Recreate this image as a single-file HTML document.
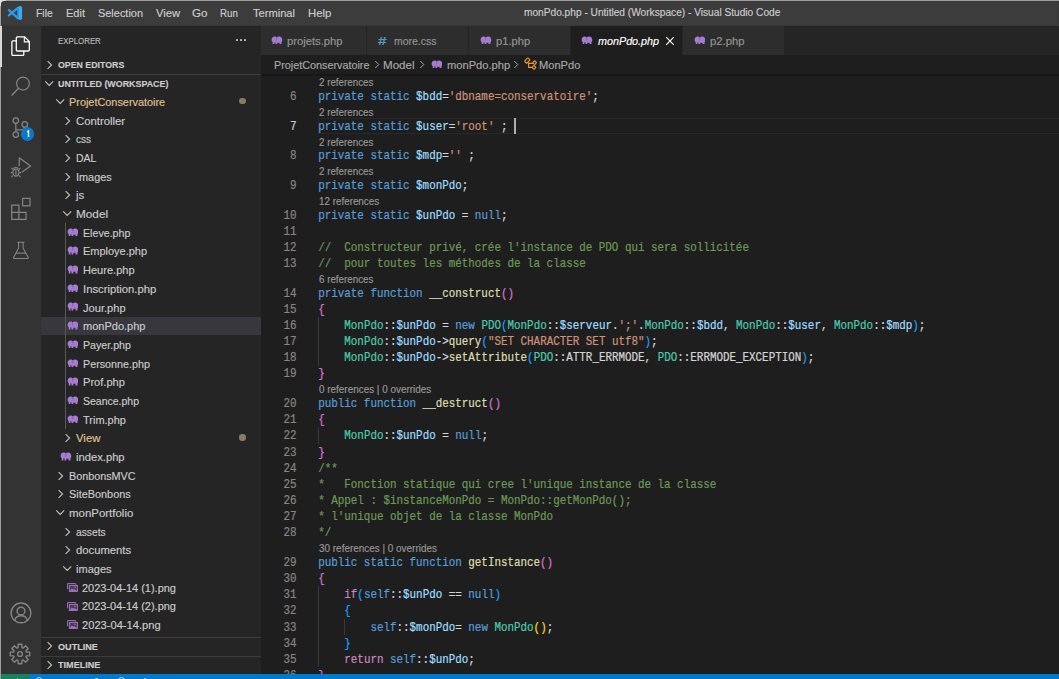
<!DOCTYPE html>
<html><head><meta charset="utf-8"><title>VS Code</title>
<style>html,body{margin:0;padding:0;}body{width:1059px;height:679px;overflow:hidden;position:relative;background:#1e1e1e;}</style>
</head><body>
<div style="position:absolute;left:0px;top:0px;width:1059px;height:679px;background:#9e9e9e;"></div>
<div style="position:absolute;left:0px;top:0px;width:6px;height:6px;background:#dedede;"></div>
<div style="position:absolute;left:1.1px;top:1.1px;width:1057.9px;height:24.9px;background:#3c3c3c;border-top-left-radius:4px;box-shadow:inset 0 0 0 0.5px #333;"></div>
<div style="position:absolute;left:1px;top:26px;width:40px;height:648px;background:#333333;"></div>
<div style="position:absolute;left:41px;top:26px;width:220px;height:648px;background:#252526;"></div>
<div style="position:absolute;left:261px;top:26px;width:798px;height:29px;background:#252526;"></div>
<div style="position:absolute;left:261px;top:55px;width:798px;height:619px;background:#1e1e1e;"></div>
<svg style="position:absolute;left:0px;top:0px;" width="30" height="30" viewBox="0 0 30 30">
<path d="M8.9 10.1 L17.6 17.9 M8.9 15.4 L17.6 8.2" stroke="#2a9be8" stroke-width="2.3" stroke-linecap="round"/>
<path d="M17.3 7 L20.2 5.9 L22.1 7.1 V18.9 L20.2 20.1 L17.3 19 Z" fill="#3aaaf5"/>
<path d="M17.3 7 L18.6 8.2 V17.8 L17.3 19 Z" fill="#1f8ad8"/>
</svg>
<div style="position:absolute;left:36.14px;top:7.04px;font-family:'Liberation Sans', sans-serif;font-size:11px;font-weight:400;font-style:normal;color:#cccccc;white-space:pre;-webkit-text-stroke:0.15px;transform:scaleX(0.9439);transform-origin:0 0;">File</div>
<div style="position:absolute;left:66.24px;top:7.04px;font-family:'Liberation Sans', sans-serif;font-size:11px;font-weight:400;font-style:normal;color:#cccccc;white-space:pre;-webkit-text-stroke:0.15px;transform:scaleX(1.0013);transform-origin:0 0;">Edit</div>
<div style="position:absolute;left:97.94px;top:7.04px;font-family:'Liberation Sans', sans-serif;font-size:11px;font-weight:400;font-style:normal;color:#cccccc;white-space:pre;-webkit-text-stroke:0.15px;transform:scaleX(0.9938);transform-origin:0 0;">Selection</div>
<div style="position:absolute;left:155.64px;top:7.04px;font-family:'Liberation Sans', sans-serif;font-size:11px;font-weight:400;font-style:normal;color:#cccccc;white-space:pre;-webkit-text-stroke:0.15px;transform:scaleX(1.0191);transform-origin:0 0;">View</div>
<div style="position:absolute;left:192.34px;top:7.04px;font-family:'Liberation Sans', sans-serif;font-size:11px;font-weight:400;font-style:normal;color:#cccccc;white-space:pre;-webkit-text-stroke:0.15px;transform:scaleX(1.0584);transform-origin:0 0;">Go</div>
<div style="position:absolute;left:220.24px;top:7.04px;font-family:'Liberation Sans', sans-serif;font-size:11px;font-weight:400;font-style:normal;color:#cccccc;white-space:pre;-webkit-text-stroke:0.15px;transform:scaleX(0.8860);transform-origin:0 0;">Run</div>
<div style="position:absolute;left:252.94px;top:7.04px;font-family:'Liberation Sans', sans-serif;font-size:11px;font-weight:400;font-style:normal;color:#cccccc;white-space:pre;-webkit-text-stroke:0.15px;transform:scaleX(1.0101);transform-origin:0 0;">Terminal</div>
<div style="position:absolute;left:307.54px;top:7.04px;font-family:'Liberation Sans', sans-serif;font-size:11px;font-weight:400;font-style:normal;color:#cccccc;white-space:pre;-webkit-text-stroke:0.15px;transform:scaleX(1.0302);transform-origin:0 0;">Help</div>
<div style="position:absolute;left:523.60px;top:7.25px;font-family:'Liberation Sans', sans-serif;font-size:10px;font-weight:400;font-style:normal;color:#cccccc;white-space:pre;-webkit-text-stroke:0.15px;transform:scaleX(1.0150);transform-origin:0 0;">monPdo.php - Untitled (Workspace) - Visual Studio Code</div>
<div style="position:absolute;left:0px;top:26px;width:2px;height:40.5px;background:#d9d9d9;"></div>
<svg style="position:absolute;left:9px;top:34px;" width="24" height="24" viewBox="0 0 24 24">
<path d="M7.3 6.8 H3.9 a1 1 0 0 0 -1 1 V20.4 a1 1 0 0 0 1 1 H13.8 a1 1 0 0 0 1 -1 V17" fill="none" stroke="#fff" stroke-width="1.3"/>
<path d="M8.3 2.9 H15.7 L20.3 7.5 V16 a1 1 0 0 1 -1 1 H8.3 a1 1 0 0 1 -1 -1 V3.9 a1 1 0 0 1 1 -1 Z" fill="none" stroke="#fff" stroke-width="1.3"/>
<path d="M15.3 2.9 V7.9 H20.3" fill="none" stroke="#fff" stroke-width="1.1"/>
</svg>
<svg style="position:absolute;left:9px;top:74px;" width="24" height="24" viewBox="0 0 24 24">
<circle cx="14" cy="9.6" r="6.4" fill="none" stroke="#858585" stroke-width="1.25"/>
<path d="M9.6 14.2 L2.6 21.5" stroke="#858585" stroke-width="1.35"/>
</svg>
<svg style="position:absolute;left:9px;top:114px;" width="24" height="24" viewBox="0 0 24 24">
<circle cx="6.8" cy="6.6" r="2.75" fill="none" stroke="#858585" stroke-width="1.25"/>
<circle cx="6.8" cy="20.5" r="2.75" fill="none" stroke="#858585" stroke-width="1.25"/>
<circle cx="15.8" cy="10.4" r="2.75" fill="none" stroke="#858585" stroke-width="1.25"/>
<path d="M6.8 9.3 V17.8 M15.8 13.1 C15.8 15.1 14.6 15.8 12.6 15.8 H6.8" fill="none" stroke="#858585" stroke-width="1.25"/>
</svg>
<div style="position:absolute;left:20.5px;top:127.3px;width:13.8px;height:13.8px;border-radius:50%;background:#0a78d0;"></div>
<svg style="position:absolute;left:20.5px;top:127.3px;" width="14" height="14" viewBox="0 0 14 14"><path d="M6.1 5.1 L7.5 3.9 V9.9" fill="none" stroke="#ffffff" stroke-width="1.35"/></svg>
<svg style="position:absolute;left:9px;top:155px;" width="24" height="24" viewBox="0 0 24 24">
<path d="M10.2 2.8 L21.6 11.1 L12.8 17.3" fill="none" stroke="#858585" stroke-width="1.25" stroke-linejoin="round"/>
<path d="M10.2 2.8 V11" fill="none" stroke="#858585" stroke-width="1.25"/>
<ellipse cx="6.9" cy="17.6" rx="3" ry="3.6" fill="none" stroke="#858585" stroke-width="1.2"/>
<path d="M3.9 14.4 L2.4 13 M9.9 14.4 L11.4 13 M3.6 17.6 H1.8 M10.2 17.6 H12 M3.9 20.6 L2.4 22 M9.9 20.6 L11.4 22 M6.9 14.5 V20.5 M4.6 13.9 A2.4 2.4 0 0 1 9.2 13.9" fill="none" stroke="#858585" stroke-width="1.1"/>
</svg>
<svg style="position:absolute;left:9px;top:196px;" width="24" height="24" viewBox="0 0 24 24">
<path d="M2.7 9.2 H9.9 V16.4 H2.7 Z M2.7 16.4 H9.9 V23.4 H2.7 Z M9.9 16.4 H17 V23.4 H9.9 Z" fill="none" stroke="#858585" stroke-width="1.2"/>
<rect x="13.6" y="2.4" width="7.4" height="7.4" fill="none" stroke="#858585" stroke-width="1.2"/>
</svg>
<svg style="position:absolute;left:9px;top:238px;" width="24" height="24" viewBox="0 0 24 24"><g transform="translate(12 12) scale(0.87) translate(-12 -11.6)">
<path d="M7.6 2.6 H16 M9.3 2.6 V9.3 L3.5 20.2 A0.9 0.9 0 0 0 4.3 21.4 H19.5 A0.9 0.9 0 0 0 20.3 20.2 L14.4 9.3 V2.6" fill="none" stroke="#858585" stroke-width="1.25" stroke-linejoin="round"/>
<path d="M6.2 15.2 H17.7" fill="none" stroke="#858585" stroke-width="1.3"/></g>
</svg>
<svg style="position:absolute;left:8.5px;top:601px;" width="24" height="24" viewBox="0 0 24 24">
<circle cx="12" cy="11.9" r="9.9" fill="none" stroke="#858585" stroke-width="1.4"/>
<circle cx="12" cy="10.1" r="3.9" fill="none" stroke="#858585" stroke-width="1.4"/>
<path d="M5.6 19.4 C6.4 16.3 8.8 14.8 12 14.8 C15.2 14.8 17.6 16.3 18.4 19.4" fill="none" stroke="#858585" stroke-width="1.4"/>
</svg>
<svg style="position:absolute;left:8.1px;top:641.7px;" width="24" height="24" viewBox="0 0 24 24"><path d="M18.31 10.05 L21.72 10.13 L21.72 13.87 L18.31 13.95 L17.84 15.08 L20.20 17.55 L17.55 20.20 L15.08 17.84 L13.95 18.31 L13.87 21.72 L10.13 21.72 L10.05 18.31 L8.92 17.84 L6.45 20.20 L3.80 17.55 L6.16 15.08 L5.69 13.95 L2.28 13.87 L2.28 10.13 L5.69 10.05 L6.16 8.92 L3.80 6.45 L6.45 3.80 L8.92 6.16 L10.05 5.69 L10.13 2.28 L13.87 2.28 L13.95 5.69 L15.08 6.16 L17.55 3.80 L20.20 6.45 L17.84 8.92 Z" fill="none" stroke="#858585" stroke-width="1.35" stroke-linejoin="round"/><circle cx="12" cy="12" r="2.4" fill="none" stroke="#858585" stroke-width="1.35"/></svg>
<div style="position:absolute;left:57.52px;top:35.31px;font-family:'Liberation Sans', sans-serif;font-size:9.6px;font-weight:400;font-style:normal;color:#bbbbbb;white-space:pre;-webkit-text-stroke:0.15px;transform:scaleX(0.8191);transform-origin:0 0;">EXPLORER</div>
<div style="position:absolute;left:235.5px;top:38.9px;width:2.2px;height:2.2px;background:#b8b8b8;border-radius:0.5px;"></div>
<div style="position:absolute;left:239.9px;top:38.9px;width:2.2px;height:2.2px;background:#b8b8b8;border-radius:0.5px;"></div>
<div style="position:absolute;left:244.3px;top:38.9px;width:2.2px;height:2.2px;background:#b8b8b8;border-radius:0.5px;"></div>
<svg style="position:absolute;left:45.5px;top:59.599999999999994px;" width="8" height="10" viewBox="0 0 8 10"><path d="M1.6 1.2 L5.6 5 L1.6 8.8" fill="none" stroke="#c5c5c5" stroke-width="1.05"/></svg>
<div style="position:absolute;left:57.53px;top:58.90px;font-family:'Liberation Sans', sans-serif;font-size:9.5px;font-weight:700;font-style:normal;color:#cccccc;white-space:pre;-webkit-text-stroke:0.15px;transform:scaleX(0.9258);transform-origin:0 0;">OPEN EDITORS</div>
<div style="position:absolute;left:41px;top:73.8px;width:220px;height:1px;background:#3c3c3c;"></div>
<svg style="position:absolute;left:43.7px;top:80.2px;" width="11" height="7" viewBox="0 0 11 7"><path d="M1.2 1.4 L5.2 5.4 L9.2 1.4" fill="none" stroke="#c5c5c5" stroke-width="1.05"/></svg>
<div style="position:absolute;left:57.53px;top:78.20px;font-family:'Liberation Sans', sans-serif;font-size:9.5px;font-weight:700;font-style:normal;color:#cccccc;white-space:pre;-webkit-text-stroke:0.15px;transform:scaleX(0.9354);transform-origin:0 0;">UNTITLED (WORKSPACE)</div>
<div style="position:absolute;left:41px;top:316.72px;width:220px;height:18.68px;background:#37373d;"></div>
<svg style="position:absolute;left:55.2px;top:98.4px;" width="11" height="7" viewBox="0 0 11 7"><path d="M1.2 1.4 L5.2 5.4 L9.2 1.4" fill="none" stroke="#c5c5c5" stroke-width="1.05"/></svg>
<div style="position:absolute;left:69.44px;top:96.04px;font-family:'Liberation Sans', sans-serif;font-size:11px;font-weight:400;font-style:normal;color:#e2c08d;white-space:pre;-webkit-text-stroke:0.15px;transform:scaleX(0.9893);transform-origin:0 0;">ProjetConservatoire</div>
<div style="position:absolute;left:239.39999999999998px;top:97.9px;width:6.6px;height:6.6px;border-radius:50%;background:#8a7b64;"></div>
<svg style="position:absolute;left:63.7px;top:115.58000000000001px;" width="8" height="10" viewBox="0 0 8 10"><path d="M1.6 1.2 L5.6 5 L1.6 8.8" fill="none" stroke="#c5c5c5" stroke-width="1.05"/></svg>
<div style="position:absolute;left:76.24px;top:114.72px;font-family:'Liberation Sans', sans-serif;font-size:11px;font-weight:400;font-style:normal;color:#cccccc;white-space:pre;-webkit-text-stroke:0.15px;transform:scaleX(1.0298);transform-origin:0 0;">Controller</div>
<svg style="position:absolute;left:63.7px;top:134.26px;" width="8" height="10" viewBox="0 0 8 10"><path d="M1.6 1.2 L5.6 5 L1.6 8.8" fill="none" stroke="#c5c5c5" stroke-width="1.05"/></svg>
<div style="position:absolute;left:76.24px;top:133.40px;font-family:'Liberation Sans', sans-serif;font-size:11px;font-weight:400;font-style:normal;color:#cccccc;white-space:pre;-webkit-text-stroke:0.15px;transform:scaleX(0.9155);transform-origin:0 0;">css</div>
<svg style="position:absolute;left:63.7px;top:152.94px;" width="8" height="10" viewBox="0 0 8 10"><path d="M1.6 1.2 L5.6 5 L1.6 8.8" fill="none" stroke="#c5c5c5" stroke-width="1.05"/></svg>
<div style="position:absolute;left:76.24px;top:152.08px;font-family:'Liberation Sans', sans-serif;font-size:11px;font-weight:400;font-style:normal;color:#cccccc;white-space:pre;-webkit-text-stroke:0.15px;transform:scaleX(0.9552);transform-origin:0 0;">DAL</div>
<svg style="position:absolute;left:63.7px;top:171.62px;" width="8" height="10" viewBox="0 0 8 10"><path d="M1.6 1.2 L5.6 5 L1.6 8.8" fill="none" stroke="#c5c5c5" stroke-width="1.05"/></svg>
<div style="position:absolute;left:76.24px;top:170.76px;font-family:'Liberation Sans', sans-serif;font-size:11px;font-weight:400;font-style:normal;color:#cccccc;white-space:pre;-webkit-text-stroke:0.15px;transform:scaleX(0.9888);transform-origin:0 0;">Images</div>
<svg style="position:absolute;left:63.7px;top:190.3px;" width="8" height="10" viewBox="0 0 8 10"><path d="M1.6 1.2 L5.6 5 L1.6 8.8" fill="none" stroke="#c5c5c5" stroke-width="1.05"/></svg>
<div style="position:absolute;left:76.24px;top:189.44px;font-family:'Liberation Sans', sans-serif;font-size:11px;font-weight:400;font-style:normal;color:#cccccc;white-space:pre;-webkit-text-stroke:0.15px;transform:scaleX(1.0334);transform-origin:0 0;">js</div>
<svg style="position:absolute;left:62.0px;top:210.48000000000002px;" width="11" height="7" viewBox="0 0 11 7"><path d="M1.2 1.4 L5.2 5.4 L9.2 1.4" fill="none" stroke="#c5c5c5" stroke-width="1.05"/></svg>
<div style="position:absolute;left:76.24px;top:208.12px;font-family:'Liberation Sans', sans-serif;font-size:11px;font-weight:400;font-style:normal;color:#cccccc;white-space:pre;-webkit-text-stroke:0.15px;transform:scaleX(1.0694);transform-origin:0 0;">Model</div>
<svg style="position:absolute;left:66.9px;top:227.76px;" width="11.6" height="8.6" viewBox="0 0 11.6 8.6"><path d="M0.7 4.8 C0.3 2.2 1.5 0.4 3.5 0.4 C4.6 0.4 5.3 0.9 5.8 1.5 C6.5 0.7 7.5 0.4 8.3 0.4 C10.2 0.4 11.3 2 11.3 4 C11.3 5.2 10.9 5.8 10.5 6.2 L10.5 8.4 L8.5 8.4 L8.5 6.8 L6.3 6.8 L6.3 8.4 L4.5 8.4 L4.5 6.6 C3.9 6.6 3.6 6.4 3.4 6.2 L3.4 8.4 L1.7 8.4 L1.7 6.2 C1.2 5.9 0.8 5.4 0.7 4.8 Z" fill="#a57ccf"/>
    <path d="M5.8 1.5 C6.1 2.6 5.9 3.8 5.3 4.6" fill="none" stroke="#7d56a6" stroke-width="0.7"/></svg>
<div style="position:absolute;left:82.64px;top:226.80px;font-family:'Liberation Sans', sans-serif;font-size:11px;font-weight:400;font-style:normal;color:#cccccc;white-space:pre;-webkit-text-stroke:0.15px;transform:scaleX(0.9678);transform-origin:0 0;">Eleve.php</div>
<svg style="position:absolute;left:66.9px;top:246.44px;" width="11.6" height="8.6" viewBox="0 0 11.6 8.6"><path d="M0.7 4.8 C0.3 2.2 1.5 0.4 3.5 0.4 C4.6 0.4 5.3 0.9 5.8 1.5 C6.5 0.7 7.5 0.4 8.3 0.4 C10.2 0.4 11.3 2 11.3 4 C11.3 5.2 10.9 5.8 10.5 6.2 L10.5 8.4 L8.5 8.4 L8.5 6.8 L6.3 6.8 L6.3 8.4 L4.5 8.4 L4.5 6.6 C3.9 6.6 3.6 6.4 3.4 6.2 L3.4 8.4 L1.7 8.4 L1.7 6.2 C1.2 5.9 0.8 5.4 0.7 4.8 Z" fill="#a57ccf"/>
    <path d="M5.8 1.5 C6.1 2.6 5.9 3.8 5.3 4.6" fill="none" stroke="#7d56a6" stroke-width="0.7"/></svg>
<div style="position:absolute;left:82.64px;top:245.48px;font-family:'Liberation Sans', sans-serif;font-size:11px;font-weight:400;font-style:normal;color:#cccccc;white-space:pre;-webkit-text-stroke:0.15px;transform:scaleX(0.9980);transform-origin:0 0;">Employe.php</div>
<svg style="position:absolute;left:66.9px;top:265.12px;" width="11.6" height="8.6" viewBox="0 0 11.6 8.6"><path d="M0.7 4.8 C0.3 2.2 1.5 0.4 3.5 0.4 C4.6 0.4 5.3 0.9 5.8 1.5 C6.5 0.7 7.5 0.4 8.3 0.4 C10.2 0.4 11.3 2 11.3 4 C11.3 5.2 10.9 5.8 10.5 6.2 L10.5 8.4 L8.5 8.4 L8.5 6.8 L6.3 6.8 L6.3 8.4 L4.5 8.4 L4.5 6.6 C3.9 6.6 3.6 6.4 3.4 6.2 L3.4 8.4 L1.7 8.4 L1.7 6.2 C1.2 5.9 0.8 5.4 0.7 4.8 Z" fill="#a57ccf"/>
    <path d="M5.8 1.5 C6.1 2.6 5.9 3.8 5.3 4.6" fill="none" stroke="#7d56a6" stroke-width="0.7"/></svg>
<div style="position:absolute;left:82.64px;top:264.16px;font-family:'Liberation Sans', sans-serif;font-size:11px;font-weight:400;font-style:normal;color:#cccccc;white-space:pre;-webkit-text-stroke:0.15px;transform:scaleX(1.0042);transform-origin:0 0;">Heure.php</div>
<svg style="position:absolute;left:66.9px;top:283.80000000000007px;" width="11.6" height="8.6" viewBox="0 0 11.6 8.6"><path d="M0.7 4.8 C0.3 2.2 1.5 0.4 3.5 0.4 C4.6 0.4 5.3 0.9 5.8 1.5 C6.5 0.7 7.5 0.4 8.3 0.4 C10.2 0.4 11.3 2 11.3 4 C11.3 5.2 10.9 5.8 10.5 6.2 L10.5 8.4 L8.5 8.4 L8.5 6.8 L6.3 6.8 L6.3 8.4 L4.5 8.4 L4.5 6.6 C3.9 6.6 3.6 6.4 3.4 6.2 L3.4 8.4 L1.7 8.4 L1.7 6.2 C1.2 5.9 0.8 5.4 0.7 4.8 Z" fill="#a57ccf"/>
    <path d="M5.8 1.5 C6.1 2.6 5.9 3.8 5.3 4.6" fill="none" stroke="#7d56a6" stroke-width="0.7"/></svg>
<div style="position:absolute;left:82.64px;top:282.84px;font-family:'Liberation Sans', sans-serif;font-size:11px;font-weight:400;font-style:normal;color:#cccccc;white-space:pre;-webkit-text-stroke:0.15px;transform:scaleX(1.0246);transform-origin:0 0;">Inscription.php</div>
<svg style="position:absolute;left:66.9px;top:302.48px;" width="11.6" height="8.6" viewBox="0 0 11.6 8.6"><path d="M0.7 4.8 C0.3 2.2 1.5 0.4 3.5 0.4 C4.6 0.4 5.3 0.9 5.8 1.5 C6.5 0.7 7.5 0.4 8.3 0.4 C10.2 0.4 11.3 2 11.3 4 C11.3 5.2 10.9 5.8 10.5 6.2 L10.5 8.4 L8.5 8.4 L8.5 6.8 L6.3 6.8 L6.3 8.4 L4.5 8.4 L4.5 6.6 C3.9 6.6 3.6 6.4 3.4 6.2 L3.4 8.4 L1.7 8.4 L1.7 6.2 C1.2 5.9 0.8 5.4 0.7 4.8 Z" fill="#a57ccf"/>
    <path d="M5.8 1.5 C6.1 2.6 5.9 3.8 5.3 4.6" fill="none" stroke="#7d56a6" stroke-width="0.7"/></svg>
<div style="position:absolute;left:82.64px;top:301.52px;font-family:'Liberation Sans', sans-serif;font-size:11px;font-weight:400;font-style:normal;color:#cccccc;white-space:pre;-webkit-text-stroke:0.15px;transform:scaleX(1.0091);transform-origin:0 0;">Jour.php</div>
<svg style="position:absolute;left:66.9px;top:321.16px;" width="11.6" height="8.6" viewBox="0 0 11.6 8.6"><path d="M0.7 4.8 C0.3 2.2 1.5 0.4 3.5 0.4 C4.6 0.4 5.3 0.9 5.8 1.5 C6.5 0.7 7.5 0.4 8.3 0.4 C10.2 0.4 11.3 2 11.3 4 C11.3 5.2 10.9 5.8 10.5 6.2 L10.5 8.4 L8.5 8.4 L8.5 6.8 L6.3 6.8 L6.3 8.4 L4.5 8.4 L4.5 6.6 C3.9 6.6 3.6 6.4 3.4 6.2 L3.4 8.4 L1.7 8.4 L1.7 6.2 C1.2 5.9 0.8 5.4 0.7 4.8 Z" fill="#a57ccf"/>
    <path d="M5.8 1.5 C6.1 2.6 5.9 3.8 5.3 4.6" fill="none" stroke="#7d56a6" stroke-width="0.7"/></svg>
<div style="position:absolute;left:82.64px;top:320.20px;font-family:'Liberation Sans', sans-serif;font-size:11px;font-weight:400;font-style:normal;color:#cccccc;white-space:pre;-webkit-text-stroke:0.15px;transform:scaleX(1.0016);transform-origin:0 0;">monPdo.php</div>
<svg style="position:absolute;left:66.9px;top:339.84000000000003px;" width="11.6" height="8.6" viewBox="0 0 11.6 8.6"><path d="M0.7 4.8 C0.3 2.2 1.5 0.4 3.5 0.4 C4.6 0.4 5.3 0.9 5.8 1.5 C6.5 0.7 7.5 0.4 8.3 0.4 C10.2 0.4 11.3 2 11.3 4 C11.3 5.2 10.9 5.8 10.5 6.2 L10.5 8.4 L8.5 8.4 L8.5 6.8 L6.3 6.8 L6.3 8.4 L4.5 8.4 L4.5 6.6 C3.9 6.6 3.6 6.4 3.4 6.2 L3.4 8.4 L1.7 8.4 L1.7 6.2 C1.2 5.9 0.8 5.4 0.7 4.8 Z" fill="#a57ccf"/>
    <path d="M5.8 1.5 C6.1 2.6 5.9 3.8 5.3 4.6" fill="none" stroke="#7d56a6" stroke-width="0.7"/></svg>
<div style="position:absolute;left:82.64px;top:338.88px;font-family:'Liberation Sans', sans-serif;font-size:11px;font-weight:400;font-style:normal;color:#cccccc;white-space:pre;-webkit-text-stroke:0.15px;transform:scaleX(0.9680);transform-origin:0 0;">Payer.php</div>
<svg style="position:absolute;left:66.9px;top:358.52px;" width="11.6" height="8.6" viewBox="0 0 11.6 8.6"><path d="M0.7 4.8 C0.3 2.2 1.5 0.4 3.5 0.4 C4.6 0.4 5.3 0.9 5.8 1.5 C6.5 0.7 7.5 0.4 8.3 0.4 C10.2 0.4 11.3 2 11.3 4 C11.3 5.2 10.9 5.8 10.5 6.2 L10.5 8.4 L8.5 8.4 L8.5 6.8 L6.3 6.8 L6.3 8.4 L4.5 8.4 L4.5 6.6 C3.9 6.6 3.6 6.4 3.4 6.2 L3.4 8.4 L1.7 8.4 L1.7 6.2 C1.2 5.9 0.8 5.4 0.7 4.8 Z" fill="#a57ccf"/>
    <path d="M5.8 1.5 C6.1 2.6 5.9 3.8 5.3 4.6" fill="none" stroke="#7d56a6" stroke-width="0.7"/></svg>
<div style="position:absolute;left:82.64px;top:357.56px;font-family:'Liberation Sans', sans-serif;font-size:11px;font-weight:400;font-style:normal;color:#cccccc;white-space:pre;-webkit-text-stroke:0.15px;transform:scaleX(0.9761);transform-origin:0 0;">Personne.php</div>
<svg style="position:absolute;left:66.9px;top:377.20000000000005px;" width="11.6" height="8.6" viewBox="0 0 11.6 8.6"><path d="M0.7 4.8 C0.3 2.2 1.5 0.4 3.5 0.4 C4.6 0.4 5.3 0.9 5.8 1.5 C6.5 0.7 7.5 0.4 8.3 0.4 C10.2 0.4 11.3 2 11.3 4 C11.3 5.2 10.9 5.8 10.5 6.2 L10.5 8.4 L8.5 8.4 L8.5 6.8 L6.3 6.8 L6.3 8.4 L4.5 8.4 L4.5 6.6 C3.9 6.6 3.6 6.4 3.4 6.2 L3.4 8.4 L1.7 8.4 L1.7 6.2 C1.2 5.9 0.8 5.4 0.7 4.8 Z" fill="#a57ccf"/>
    <path d="M5.8 1.5 C6.1 2.6 5.9 3.8 5.3 4.6" fill="none" stroke="#7d56a6" stroke-width="0.7"/></svg>
<div style="position:absolute;left:82.64px;top:376.24px;font-family:'Liberation Sans', sans-serif;font-size:11px;font-weight:400;font-style:normal;color:#cccccc;white-space:pre;-webkit-text-stroke:0.15px;transform:scaleX(1.0073);transform-origin:0 0;">Prof.php</div>
<svg style="position:absolute;left:66.9px;top:395.88px;" width="11.6" height="8.6" viewBox="0 0 11.6 8.6"><path d="M0.7 4.8 C0.3 2.2 1.5 0.4 3.5 0.4 C4.6 0.4 5.3 0.9 5.8 1.5 C6.5 0.7 7.5 0.4 8.3 0.4 C10.2 0.4 11.3 2 11.3 4 C11.3 5.2 10.9 5.8 10.5 6.2 L10.5 8.4 L8.5 8.4 L8.5 6.8 L6.3 6.8 L6.3 8.4 L4.5 8.4 L4.5 6.6 C3.9 6.6 3.6 6.4 3.4 6.2 L3.4 8.4 L1.7 8.4 L1.7 6.2 C1.2 5.9 0.8 5.4 0.7 4.8 Z" fill="#a57ccf"/>
    <path d="M5.8 1.5 C6.1 2.6 5.9 3.8 5.3 4.6" fill="none" stroke="#7d56a6" stroke-width="0.7"/></svg>
<div style="position:absolute;left:82.64px;top:394.92px;font-family:'Liberation Sans', sans-serif;font-size:11px;font-weight:400;font-style:normal;color:#cccccc;white-space:pre;-webkit-text-stroke:0.15px;transform:scaleX(0.9544);transform-origin:0 0;">Seance.php</div>
<svg style="position:absolute;left:66.9px;top:414.56000000000006px;" width="11.6" height="8.6" viewBox="0 0 11.6 8.6"><path d="M0.7 4.8 C0.3 2.2 1.5 0.4 3.5 0.4 C4.6 0.4 5.3 0.9 5.8 1.5 C6.5 0.7 7.5 0.4 8.3 0.4 C10.2 0.4 11.3 2 11.3 4 C11.3 5.2 10.9 5.8 10.5 6.2 L10.5 8.4 L8.5 8.4 L8.5 6.8 L6.3 6.8 L6.3 8.4 L4.5 8.4 L4.5 6.6 C3.9 6.6 3.6 6.4 3.4 6.2 L3.4 8.4 L1.7 8.4 L1.7 6.2 C1.2 5.9 0.8 5.4 0.7 4.8 Z" fill="#a57ccf"/>
    <path d="M5.8 1.5 C6.1 2.6 5.9 3.8 5.3 4.6" fill="none" stroke="#7d56a6" stroke-width="0.7"/></svg>
<div style="position:absolute;left:82.64px;top:413.60px;font-family:'Liberation Sans', sans-serif;font-size:11px;font-weight:400;font-style:normal;color:#cccccc;white-space:pre;-webkit-text-stroke:0.15px;transform:scaleX(0.9974);transform-origin:0 0;">Trim.php</div>
<svg style="position:absolute;left:63.7px;top:433.14px;" width="8" height="10" viewBox="0 0 8 10"><path d="M1.6 1.2 L5.6 5 L1.6 8.8" fill="none" stroke="#c5c5c5" stroke-width="1.05"/></svg>
<div style="position:absolute;left:76.24px;top:432.28px;font-family:'Liberation Sans', sans-serif;font-size:11px;font-weight:400;font-style:normal;color:#e2c08d;white-space:pre;-webkit-text-stroke:0.15px;transform:scaleX(1.0323);transform-origin:0 0;">View</div>
<div style="position:absolute;left:239.39999999999998px;top:434.14px;width:6.6px;height:6.6px;border-radius:50%;background:#8a7b64;"></div>
<svg style="position:absolute;left:60.1px;top:451.9200000000001px;" width="11.6" height="8.6" viewBox="0 0 11.6 8.6"><path d="M0.7 4.8 C0.3 2.2 1.5 0.4 3.5 0.4 C4.6 0.4 5.3 0.9 5.8 1.5 C6.5 0.7 7.5 0.4 8.3 0.4 C10.2 0.4 11.3 2 11.3 4 C11.3 5.2 10.9 5.8 10.5 6.2 L10.5 8.4 L8.5 8.4 L8.5 6.8 L6.3 6.8 L6.3 8.4 L4.5 8.4 L4.5 6.6 C3.9 6.6 3.6 6.4 3.4 6.2 L3.4 8.4 L1.7 8.4 L1.7 6.2 C1.2 5.9 0.8 5.4 0.7 4.8 Z" fill="#a57ccf"/>
    <path d="M5.8 1.5 C6.1 2.6 5.9 3.8 5.3 4.6" fill="none" stroke="#7d56a6" stroke-width="0.7"/></svg>
<div style="position:absolute;left:75.84px;top:450.96px;font-family:'Liberation Sans', sans-serif;font-size:11px;font-weight:400;font-style:normal;color:#cccccc;white-space:pre;-webkit-text-stroke:0.15px;transform:scaleX(1.0186);transform-origin:0 0;">index.php</div>
<svg style="position:absolute;left:56.9px;top:470.5px;" width="8" height="10" viewBox="0 0 8 10"><path d="M1.6 1.2 L5.6 5 L1.6 8.8" fill="none" stroke="#c5c5c5" stroke-width="1.05"/></svg>
<div style="position:absolute;left:69.44px;top:469.64px;font-family:'Liberation Sans', sans-serif;font-size:11px;font-weight:400;font-style:normal;color:#cccccc;white-space:pre;-webkit-text-stroke:0.15px;transform:scaleX(0.9807);transform-origin:0 0;">BonbonsMVC</div>
<svg style="position:absolute;left:56.9px;top:489.17999999999995px;" width="8" height="10" viewBox="0 0 8 10"><path d="M1.6 1.2 L5.6 5 L1.6 8.8" fill="none" stroke="#c5c5c5" stroke-width="1.05"/></svg>
<div style="position:absolute;left:69.44px;top:488.32px;font-family:'Liberation Sans', sans-serif;font-size:11px;font-weight:400;font-style:normal;color:#cccccc;white-space:pre;-webkit-text-stroke:0.15px;transform:scaleX(0.9886);transform-origin:0 0;">SiteBonbons</div>
<svg style="position:absolute;left:55.2px;top:509.36px;" width="11" height="7" viewBox="0 0 11 7"><path d="M1.2 1.4 L5.2 5.4 L9.2 1.4" fill="none" stroke="#c5c5c5" stroke-width="1.05"/></svg>
<div style="position:absolute;left:69.44px;top:507.00px;font-family:'Liberation Sans', sans-serif;font-size:11px;font-weight:400;font-style:normal;color:#cccccc;white-space:pre;-webkit-text-stroke:0.15px;transform:scaleX(1.0415);transform-origin:0 0;">monPortfolio</div>
<svg style="position:absolute;left:63.7px;top:526.54px;" width="8" height="10" viewBox="0 0 8 10"><path d="M1.6 1.2 L5.6 5 L1.6 8.8" fill="none" stroke="#c5c5c5" stroke-width="1.05"/></svg>
<div style="position:absolute;left:76.24px;top:525.68px;font-family:'Liberation Sans', sans-serif;font-size:11px;font-weight:400;font-style:normal;color:#cccccc;white-space:pre;-webkit-text-stroke:0.15px;transform:scaleX(0.9317);transform-origin:0 0;">assets</div>
<svg style="position:absolute;left:63.7px;top:545.22px;" width="8" height="10" viewBox="0 0 8 10"><path d="M1.6 1.2 L5.6 5 L1.6 8.8" fill="none" stroke="#c5c5c5" stroke-width="1.05"/></svg>
<div style="position:absolute;left:76.24px;top:544.36px;font-family:'Liberation Sans', sans-serif;font-size:11px;font-weight:400;font-style:normal;color:#cccccc;white-space:pre;-webkit-text-stroke:0.15px;transform:scaleX(1.0240);transform-origin:0 0;">documents</div>
<svg style="position:absolute;left:62.0px;top:565.4px;" width="11" height="7" viewBox="0 0 11 7"><path d="M1.2 1.4 L5.2 5.4 L9.2 1.4" fill="none" stroke="#c5c5c5" stroke-width="1.05"/></svg>
<div style="position:absolute;left:76.24px;top:563.04px;font-family:'Liberation Sans', sans-serif;font-size:11px;font-weight:400;font-style:normal;color:#cccccc;white-space:pre;-webkit-text-stroke:0.15px;transform:scaleX(1.0034);transform-origin:0 0;">images</div>
<svg style="position:absolute;left:67.3px;top:583.08px;" width="11" height="9" viewBox="0 0 11 9"><path d="M0.6 6.2 V0.6 H8.6 V1.6" fill="none" stroke="#a074c4" stroke-width="1"/>
    <rect x="2.4" y="2.4" width="8" height="6" fill="#a074c4" fill-opacity="0.3" stroke="#a074c4" stroke-width="1"/>
    <path d="M2.6 8.3 L4.8 5.4 L6.4 6.8 L7.4 6 L10.2 8.3 Z" fill="#a074c4"/>
    <circle cx="8" cy="4.2" r="0.8" fill="#a074c4"/></svg>
<div style="position:absolute;left:82.44px;top:581.72px;font-family:'Liberation Sans', sans-serif;font-size:11px;font-weight:400;font-style:normal;color:#cccccc;white-space:pre;-webkit-text-stroke:0.15px;transform:scaleX(0.9979);transform-origin:0 0;">2023-04-14 (1).png</div>
<svg style="position:absolute;left:67.3px;top:601.76px;" width="11" height="9" viewBox="0 0 11 9"><path d="M0.6 6.2 V0.6 H8.6 V1.6" fill="none" stroke="#a074c4" stroke-width="1"/>
    <rect x="2.4" y="2.4" width="8" height="6" fill="#a074c4" fill-opacity="0.3" stroke="#a074c4" stroke-width="1"/>
    <path d="M2.6 8.3 L4.8 5.4 L6.4 6.8 L7.4 6 L10.2 8.3 Z" fill="#a074c4"/>
    <circle cx="8" cy="4.2" r="0.8" fill="#a074c4"/></svg>
<div style="position:absolute;left:82.44px;top:600.40px;font-family:'Liberation Sans', sans-serif;font-size:11px;font-weight:400;font-style:normal;color:#cccccc;white-space:pre;-webkit-text-stroke:0.15px;transform:scaleX(0.9979);transform-origin:0 0;">2023-04-14 (2).png</div>
<svg style="position:absolute;left:67.3px;top:620.4399999999999px;" width="11" height="9" viewBox="0 0 11 9"><path d="M0.6 6.2 V0.6 H8.6 V1.6" fill="none" stroke="#a074c4" stroke-width="1"/>
    <rect x="2.4" y="2.4" width="8" height="6" fill="#a074c4" fill-opacity="0.3" stroke="#a074c4" stroke-width="1"/>
    <path d="M2.6 8.3 L4.8 5.4 L6.4 6.8 L7.4 6 L10.2 8.3 Z" fill="#a074c4"/>
    <circle cx="8" cy="4.2" r="0.8" fill="#a074c4"/></svg>
<div style="position:absolute;left:82.44px;top:619.08px;font-family:'Liberation Sans', sans-serif;font-size:11px;font-weight:400;font-style:normal;color:#cccccc;white-space:pre;-webkit-text-stroke:0.15px;transform:scaleX(1.0118);transform-origin:0 0;">2023-04-14.png</div>
<div style="position:absolute;left:64.6px;top:223.32px;width:1px;height:205.48px;background:#585858;"></div>
<div style="position:absolute;left:41px;top:636.8px;width:220px;height:1px;background:#3c3c3c;"></div>
<svg style="position:absolute;left:45.5px;top:641.2px;" width="8" height="10" viewBox="0 0 8 10"><path d="M1.6 1.2 L5.6 5 L1.6 8.8" fill="none" stroke="#c5c5c5" stroke-width="1.05"/></svg>
<div style="position:absolute;left:57.51px;top:640.53px;font-family:'Liberation Sans', sans-serif;font-size:9.8px;font-weight:700;font-style:normal;color:#cccccc;white-space:pre;-webkit-text-stroke:0.15px;transform:scaleX(0.9283);transform-origin:0 0;">OUTLINE</div>
<div style="position:absolute;left:41px;top:655.5px;width:220px;height:1px;background:#3c3c3c;"></div>
<svg style="position:absolute;left:45.5px;top:660px;" width="8" height="10" viewBox="0 0 8 10"><path d="M1.6 1.2 L5.6 5 L1.6 8.8" fill="none" stroke="#c5c5c5" stroke-width="1.05"/></svg>
<div style="position:absolute;left:57.51px;top:659.33px;font-family:'Liberation Sans', sans-serif;font-size:9.8px;font-weight:700;font-style:normal;color:#cccccc;white-space:pre;-webkit-text-stroke:0.15px;transform:scaleX(0.9277);transform-origin:0 0;">TIMELINE</div>
<div style="position:absolute;left:261px;top:26px;width:105.39999999999998px;height:28.799999999999997px;background:#2d2d2d;"></div>
<svg style="position:absolute;left:271.09999999999997px;top:35.5px;" width="11.6" height="8.6" viewBox="0 0 11.6 8.6"><path d="M0.7 4.8 C0.3 2.2 1.5 0.4 3.5 0.4 C4.6 0.4 5.3 0.9 5.8 1.5 C6.5 0.7 7.5 0.4 8.3 0.4 C10.2 0.4 11.3 2 11.3 4 C11.3 5.2 10.9 5.8 10.5 6.2 L10.5 8.4 L8.5 8.4 L8.5 6.8 L6.3 6.8 L6.3 8.4 L4.5 8.4 L4.5 6.6 C3.9 6.6 3.6 6.4 3.4 6.2 L3.4 8.4 L1.7 8.4 L1.7 6.2 C1.2 5.9 0.8 5.4 0.7 4.8 Z" fill="#a57ccf"/>
    <path d="M5.8 1.5 C6.1 2.6 5.9 3.8 5.3 4.6" fill="none" stroke="#7d56a6" stroke-width="0.7"/></svg>
<div style="position:absolute;left:287.34px;top:35.14px;font-family:'Liberation Sans', sans-serif;font-size:11px;font-weight:400;font-style:normal;color:#969696;white-space:pre;-webkit-text-stroke:0.15px;transform:scaleX(1.0216);transform-origin:0 0;">projets.php</div>
<div style="position:absolute;left:367.4px;top:26px;width:100.90000000000003px;height:28.799999999999997px;background:#2d2d2d;"></div>
<div style="position:absolute;left:378.37px;top:35.09px;font-family:'Liberation Sans', sans-serif;font-size:10.5px;font-weight:700;font-style:normal;color:#519aba;white-space:pre;-webkit-text-stroke:0.15px;transform:scaleX(1.4598);transform-origin:0 0;">#</div>
<div style="position:absolute;left:394.34px;top:35.14px;font-family:'Liberation Sans', sans-serif;font-size:11px;font-weight:400;font-style:normal;color:#969696;white-space:pre;-webkit-text-stroke:0.15px;transform:scaleX(0.9511);transform-origin:0 0;">more.css</div>
<div style="position:absolute;left:469.3px;top:26px;width:101.19999999999999px;height:28.799999999999997px;background:#2d2d2d;"></div>
<svg style="position:absolute;left:480.09999999999997px;top:35.5px;" width="11.6" height="8.6" viewBox="0 0 11.6 8.6"><path d="M0.7 4.8 C0.3 2.2 1.5 0.4 3.5 0.4 C4.6 0.4 5.3 0.9 5.8 1.5 C6.5 0.7 7.5 0.4 8.3 0.4 C10.2 0.4 11.3 2 11.3 4 C11.3 5.2 10.9 5.8 10.5 6.2 L10.5 8.4 L8.5 8.4 L8.5 6.8 L6.3 6.8 L6.3 8.4 L4.5 8.4 L4.5 6.6 C3.9 6.6 3.6 6.4 3.4 6.2 L3.4 8.4 L1.7 8.4 L1.7 6.2 C1.2 5.9 0.8 5.4 0.7 4.8 Z" fill="#a57ccf"/>
    <path d="M5.8 1.5 C6.1 2.6 5.9 3.8 5.3 4.6" fill="none" stroke="#7d56a6" stroke-width="0.7"/></svg>
<div style="position:absolute;left:496.34px;top:35.14px;font-family:'Liberation Sans', sans-serif;font-size:11px;font-weight:400;font-style:normal;color:#969696;white-space:pre;-webkit-text-stroke:0.15px;transform:scaleX(1.0133);transform-origin:0 0;">p1.php</div>
<div style="position:absolute;left:570.5px;top:26px;width:111.89999999999998px;height:28.799999999999997px;background:#1e1e1e;"></div>
<svg style="position:absolute;left:581.3000000000001px;top:35.5px;" width="11.6" height="8.6" viewBox="0 0 11.6 8.6"><path d="M0.7 4.8 C0.3 2.2 1.5 0.4 3.5 0.4 C4.6 0.4 5.3 0.9 5.8 1.5 C6.5 0.7 7.5 0.4 8.3 0.4 C10.2 0.4 11.3 2 11.3 4 C11.3 5.2 10.9 5.8 10.5 6.2 L10.5 8.4 L8.5 8.4 L8.5 6.8 L6.3 6.8 L6.3 8.4 L4.5 8.4 L4.5 6.6 C3.9 6.6 3.6 6.4 3.4 6.2 L3.4 8.4 L1.7 8.4 L1.7 6.2 C1.2 5.9 0.8 5.4 0.7 4.8 Z" fill="#a57ccf"/>
    <path d="M5.8 1.5 C6.1 2.6 5.9 3.8 5.3 4.6" fill="none" stroke="#7d56a6" stroke-width="0.7"/></svg>
<div style="position:absolute;left:597.54px;top:35.14px;font-family:'Liberation Sans', sans-serif;font-size:11px;font-weight:400;font-style:italic;color:#ffffff;white-space:pre;-webkit-text-stroke:0.15px;transform:scaleX(0.9789);transform-origin:0 0;">monPdo.php</div>
<div style="position:absolute;left:683.4px;top:26px;width:100.80000000000007px;height:28.799999999999997px;background:#2d2d2d;"></div>
<svg style="position:absolute;left:693.6px;top:35.5px;" width="11.6" height="8.6" viewBox="0 0 11.6 8.6"><path d="M0.7 4.8 C0.3 2.2 1.5 0.4 3.5 0.4 C4.6 0.4 5.3 0.9 5.8 1.5 C6.5 0.7 7.5 0.4 8.3 0.4 C10.2 0.4 11.3 2 11.3 4 C11.3 5.2 10.9 5.8 10.5 6.2 L10.5 8.4 L8.5 8.4 L8.5 6.8 L6.3 6.8 L6.3 8.4 L4.5 8.4 L4.5 6.6 C3.9 6.6 3.6 6.4 3.4 6.2 L3.4 8.4 L1.7 8.4 L1.7 6.2 C1.2 5.9 0.8 5.4 0.7 4.8 Z" fill="#a57ccf"/>
    <path d="M5.8 1.5 C6.1 2.6 5.9 3.8 5.3 4.6" fill="none" stroke="#7d56a6" stroke-width="0.7"/></svg>
<div style="position:absolute;left:709.84px;top:35.14px;font-family:'Liberation Sans', sans-serif;font-size:11px;font-weight:400;font-style:normal;color:#969696;white-space:pre;-webkit-text-stroke:0.15px;transform:scaleX(1.0286);transform-origin:0 0;">p2.php</div>
<svg style="position:absolute;left:664.7px;top:35.5px;" width="10" height="10" viewBox="0 0 10 10"><path d="M1.2 1.2 L8.8 8.8 M8.8 1.2 L1.2 8.8" stroke="#ffffff" stroke-width="1.15"/></svg>
<div style="position:absolute;left:274.24px;top:58.84px;font-family:'Liberation Sans', sans-serif;font-size:11px;font-weight:400;font-style:normal;color:#a9a9a9;white-space:pre;-webkit-text-stroke:0.15px;transform:scaleX(0.9820);transform-origin:0 0;">ProjetConservatoire</div>
<svg style="position:absolute;left:374.2px;top:60.099999999999994px;" width="7" height="9" viewBox="0 0 7 9"><path d="M1.3 1 L4.8 4.5 L1.3 8" fill="none" stroke="#a9a9a9" stroke-width="1"/></svg>
<div style="position:absolute;left:383.34px;top:58.64px;font-family:'Liberation Sans', sans-serif;font-size:11px;font-weight:400;font-style:normal;color:#a9a9a9;white-space:pre;-webkit-text-stroke:0.15px;transform:scaleX(1.0522);transform-origin:0 0;">Model</div>
<svg style="position:absolute;left:418.6px;top:60.099999999999994px;" width="7" height="9" viewBox="0 0 7 9"><path d="M1.3 1 L4.8 4.5 L1.3 8" fill="none" stroke="#a9a9a9" stroke-width="1"/></svg>
<svg style="position:absolute;left:430.7px;top:59.699999999999996px;" width="11.6" height="8.6" viewBox="0 0 11.6 8.6"><path d="M0.7 4.8 C0.3 2.2 1.5 0.4 3.5 0.4 C4.6 0.4 5.3 0.9 5.8 1.5 C6.5 0.7 7.5 0.4 8.3 0.4 C10.2 0.4 11.3 2 11.3 4 C11.3 5.2 10.9 5.8 10.5 6.2 L10.5 8.4 L8.5 8.4 L8.5 6.8 L6.3 6.8 L6.3 8.4 L4.5 8.4 L4.5 6.6 C3.9 6.6 3.6 6.4 3.4 6.2 L3.4 8.4 L1.7 8.4 L1.7 6.2 C1.2 5.9 0.8 5.4 0.7 4.8 Z" fill="#a57ccf"/>
    <path d="M5.8 1.5 C6.1 2.6 5.9 3.8 5.3 4.6" fill="none" stroke="#7d56a6" stroke-width="0.7"/></svg>
<div style="position:absolute;left:446.64px;top:58.64px;font-family:'Liberation Sans', sans-serif;font-size:11px;font-weight:400;font-style:normal;color:#a9a9a9;white-space:pre;-webkit-text-stroke:0.15px;transform:scaleX(1.0130);transform-origin:0 0;">monPdo.php</div>
<svg style="position:absolute;left:513.0px;top:60.099999999999994px;" width="7" height="9" viewBox="0 0 7 9"><path d="M1.3 1 L4.8 4.5 L1.3 8" fill="none" stroke="#a9a9a9" stroke-width="1"/></svg>
<svg style="position:absolute;left:520px;top:55px;" width="20" height="18" viewBox="0 0 20 18"><rect x="4.8" y="4.1" width="4.9" height="3.1" rx="0.6" transform="rotate(-45 7.2 5.6)" fill="none" stroke="#ee9d28" stroke-width="1.1"/>
<rect x="13.2" y="6.3" width="2.8" height="2.8" rx="0.4" transform="rotate(45 14.6 7.7)" fill="none" stroke="#ee9d28" stroke-width="1.1"/>
<rect x="12.6" y="11" width="2.8" height="2.8" rx="0.4" transform="rotate(45 14 12.4)" fill="none" stroke="#ee9d28" stroke-width="1.1"/>
<path d="M8.6 7.4 V12.4 H12.2 M8.6 8.4 H12.9" fill="none" stroke="#ee9d28" stroke-width="1.1"/></svg>
<div style="position:absolute;left:539.24px;top:58.64px;font-family:'Liberation Sans', sans-serif;font-size:11px;font-weight:400;font-style:normal;color:#a9a9a9;white-space:pre;-webkit-text-stroke:0.15px;transform:scaleX(1.0102);transform-origin:0 0;">MonPdo</div>
<div style="position:absolute;left:261px;top:74px;width:798px;height:3px;background:linear-gradient(#141414,rgba(30,30,30,0));"></div>
<div style="position:absolute;left:317.7px;top:117.67px;width:750.8px;height:16.2px;box-sizing:border-box;border:1px solid #282828;border-right:none;"></div>
<div style="position:absolute;left:317.9px;top:317.05px;width:1.2px;height:48.48px;background:#393939;"></div>
<div style="position:absolute;left:317.9px;top:427.48px;width:1.2px;height:16.16px;background:#393939;"></div>
<div style="position:absolute;left:317.9px;top:586.39px;width:1.2px;height:80.8px;background:#393939;"></div>
<div style="position:absolute;left:344.04px;top:618.71px;width:1.2px;height:16.16px;background:#393939;"></div>
<div style="position:absolute;left:318.66px;top:76.28px;font-family:'Liberation Sans', sans-serif;font-size:10.6px;font-weight:400;font-style:normal;color:#999999;white-space:pre;-webkit-text-stroke:0.15px;transform:scaleX(0.9230);transform-origin:0 0;">2 references</div>
<div style="position:absolute;left:290.01px;top:91.00px;font-family:'Liberation Mono', monospace;font-size:10.89px;font-weight:400;font-style:normal;color:#858585;white-space:pre;-webkit-text-stroke:0.2px;transform:scaleY(1.1);transform-origin:0 9px;">6</div>
<div style="position:absolute;left:318.2px;top:91px;font-family:'Liberation Mono', monospace;font-size:10.89px;white-space:pre;-webkit-text-stroke:0.2px;transform:scaleY(1.1);transform-origin:0 9px;"><span style="color:#569cd6">private static </span><span style="color:#9cdcfe">$bdd</span><span style="color:#d4d4d4">=</span><span style="color:#ce9178">&#x27;dbname=conservatoire&#x27;</span><span style="color:#d4d4d4">;</span></div>
<div style="position:absolute;left:318.66px;top:105.92px;font-family:'Liberation Sans', sans-serif;font-size:10.6px;font-weight:400;font-style:normal;color:#999999;white-space:pre;-webkit-text-stroke:0.15px;transform:scaleX(0.9230);transform-origin:0 0;">2 references</div>
<div style="position:absolute;left:290.01px;top:121.00px;font-family:'Liberation Mono', monospace;font-size:10.89px;font-weight:400;font-style:normal;color:#c6c6c6;white-space:pre;-webkit-text-stroke:0.2px;transform:scaleY(1.1);transform-origin:0 9px;">7</div>
<div style="position:absolute;left:318.2px;top:121px;font-family:'Liberation Mono', monospace;font-size:10.89px;white-space:pre;-webkit-text-stroke:0.2px;transform:scaleY(1.1);transform-origin:0 9px;"><span style="color:#569cd6">private static </span><span style="color:#9cdcfe">$user</span><span style="color:#d4d4d4">=</span><span style="color:#ce9178">&#x27;root&#x27;</span><span style="color:#d4d4d4"> ; </span></div>
<div style="position:absolute;left:318.66px;top:135.56px;font-family:'Liberation Sans', sans-serif;font-size:10.6px;font-weight:400;font-style:normal;color:#999999;white-space:pre;-webkit-text-stroke:0.15px;transform:scaleX(0.9230);transform-origin:0 0;">2 references</div>
<div style="position:absolute;left:290.01px;top:150.00px;font-family:'Liberation Mono', monospace;font-size:10.89px;font-weight:400;font-style:normal;color:#858585;white-space:pre;-webkit-text-stroke:0.2px;transform:scaleY(1.1);transform-origin:0 9px;">8</div>
<div style="position:absolute;left:318.2px;top:150px;font-family:'Liberation Mono', monospace;font-size:10.89px;white-space:pre;-webkit-text-stroke:0.2px;transform:scaleY(1.1);transform-origin:0 9px;"><span style="color:#569cd6">private static </span><span style="color:#9cdcfe">$mdp</span><span style="color:#d4d4d4">=</span><span style="color:#ce9178">&#x27;&#x27;</span><span style="color:#d4d4d4"> ;</span></div>
<div style="position:absolute;left:318.66px;top:165.20px;font-family:'Liberation Sans', sans-serif;font-size:10.6px;font-weight:400;font-style:normal;color:#999999;white-space:pre;-webkit-text-stroke:0.15px;transform:scaleX(0.9230);transform-origin:0 0;">2 references</div>
<div style="position:absolute;left:290.01px;top:180.00px;font-family:'Liberation Mono', monospace;font-size:10.89px;font-weight:400;font-style:normal;color:#858585;white-space:pre;-webkit-text-stroke:0.2px;transform:scaleY(1.1);transform-origin:0 9px;">9</div>
<div style="position:absolute;left:318.2px;top:180px;font-family:'Liberation Mono', monospace;font-size:10.89px;white-space:pre;-webkit-text-stroke:0.2px;transform:scaleY(1.1);transform-origin:0 9px;"><span style="color:#569cd6">private static </span><span style="color:#9cdcfe">$monPdo</span><span style="color:#d4d4d4">;</span></div>
<div style="position:absolute;left:318.66px;top:194.84px;font-family:'Liberation Sans', sans-serif;font-size:10.6px;font-weight:400;font-style:normal;color:#999999;white-space:pre;-webkit-text-stroke:0.15px;transform:scaleX(0.9286);transform-origin:0 0;">12 references</div>
<div style="position:absolute;left:283.48px;top:210.00px;font-family:'Liberation Mono', monospace;font-size:10.89px;font-weight:400;font-style:normal;color:#858585;white-space:pre;-webkit-text-stroke:0.2px;transform:scaleY(1.1);transform-origin:0 9px;">10</div>
<div style="position:absolute;left:318.2px;top:210px;font-family:'Liberation Mono', monospace;font-size:10.89px;white-space:pre;-webkit-text-stroke:0.2px;transform:scaleY(1.1);transform-origin:0 9px;"><span style="color:#569cd6">private static </span><span style="color:#9cdcfe">$unPdo</span><span style="color:#d4d4d4"> = </span><span style="color:#569cd6">null</span><span style="color:#d4d4d4">;</span></div>
<div style="position:absolute;left:283.48px;top:226.00px;font-family:'Liberation Mono', monospace;font-size:10.89px;font-weight:400;font-style:normal;color:#858585;white-space:pre;-webkit-text-stroke:0.2px;transform:scaleY(1.1);transform-origin:0 9px;">11</div>
<div style="position:absolute;left:283.48px;top:242.00px;font-family:'Liberation Mono', monospace;font-size:10.89px;font-weight:400;font-style:normal;color:#858585;white-space:pre;-webkit-text-stroke:0.2px;transform:scaleY(1.1);transform-origin:0 9px;">12</div>
<div style="position:absolute;left:318.2px;top:242px;font-family:'Liberation Mono', monospace;font-size:10.89px;white-space:pre;-webkit-text-stroke:0.2px;transform:scaleY(1.1);transform-origin:0 9px;"><span style="color:#6a9955">//  Constructeur privé, crée l&#x27;instance de PDO qui sera sollicitée</span></div>
<div style="position:absolute;left:283.48px;top:258.00px;font-family:'Liberation Mono', monospace;font-size:10.89px;font-weight:400;font-style:normal;color:#858585;white-space:pre;-webkit-text-stroke:0.2px;transform:scaleY(1.1);transform-origin:0 9px;">13</div>
<div style="position:absolute;left:318.2px;top:258px;font-family:'Liberation Mono', monospace;font-size:10.89px;white-space:pre;-webkit-text-stroke:0.2px;transform:scaleY(1.1);transform-origin:0 9px;"><span style="color:#6a9955">//  pour toutes les méthodes de la classe</span></div>
<div style="position:absolute;left:318.66px;top:272.96px;font-family:'Liberation Sans', sans-serif;font-size:10.6px;font-weight:400;font-style:normal;color:#999999;white-space:pre;-webkit-text-stroke:0.15px;transform:scaleX(0.9230);transform-origin:0 0;">6 references</div>
<div style="position:absolute;left:283.48px;top:288.00px;font-family:'Liberation Mono', monospace;font-size:10.89px;font-weight:400;font-style:normal;color:#858585;white-space:pre;-webkit-text-stroke:0.2px;transform:scaleY(1.1);transform-origin:0 9px;">14</div>
<div style="position:absolute;left:318.2px;top:288px;font-family:'Liberation Mono', monospace;font-size:10.89px;white-space:pre;-webkit-text-stroke:0.2px;transform:scaleY(1.1);transform-origin:0 9px;"><span style="color:#569cd6">private function </span><span style="color:#dcdcaa">__construct</span><span style="color:#da70d6">()</span></div>
<div style="position:absolute;left:283.48px;top:304.00px;font-family:'Liberation Mono', monospace;font-size:10.89px;font-weight:400;font-style:normal;color:#858585;white-space:pre;-webkit-text-stroke:0.2px;transform:scaleY(1.1);transform-origin:0 9px;">15</div>
<div style="position:absolute;left:318.2px;top:304px;font-family:'Liberation Mono', monospace;font-size:10.89px;white-space:pre;-webkit-text-stroke:0.2px;transform:scaleY(1.1);transform-origin:0 9px;"><span style="color:#da70d6">{</span></div>
<div style="position:absolute;left:283.48px;top:320.00px;font-family:'Liberation Mono', monospace;font-size:10.89px;font-weight:400;font-style:normal;color:#858585;white-space:pre;-webkit-text-stroke:0.2px;transform:scaleY(1.1);transform-origin:0 9px;">16</div>
<div style="position:absolute;left:318.2px;top:320px;font-family:'Liberation Mono', monospace;font-size:10.89px;white-space:pre;-webkit-text-stroke:0.2px;transform:scaleY(1.1);transform-origin:0 9px;"><span style="color:#d4d4d4">    </span><span style="color:#4ec9b0">MonPdo</span><span style="color:#d4d4d4">::</span><span style="color:#9cdcfe">$unPdo</span><span style="color:#d4d4d4"> = </span><span style="color:#569cd6">new </span><span style="color:#4ec9b0">PDO</span><span style="color:#179fff">(</span><span style="color:#4ec9b0">MonPdo</span><span style="color:#d4d4d4">::</span><span style="color:#9cdcfe">$serveur</span><span style="color:#d4d4d4">.</span><span style="color:#ce9178">&#x27;;&#x27;</span><span style="color:#d4d4d4">.</span><span style="color:#4ec9b0">MonPdo</span><span style="color:#d4d4d4">::</span><span style="color:#9cdcfe">$bdd</span><span style="color:#d4d4d4">, </span><span style="color:#4ec9b0">MonPdo</span><span style="color:#d4d4d4">::</span><span style="color:#9cdcfe">$user</span><span style="color:#d4d4d4">, </span><span style="color:#4ec9b0">MonPdo</span><span style="color:#d4d4d4">::</span><span style="color:#9cdcfe">$mdp</span><span style="color:#179fff">)</span><span style="color:#d4d4d4">;</span></div>
<div style="position:absolute;left:283.48px;top:336.00px;font-family:'Liberation Mono', monospace;font-size:10.89px;font-weight:400;font-style:normal;color:#858585;white-space:pre;-webkit-text-stroke:0.2px;transform:scaleY(1.1);transform-origin:0 9px;">17</div>
<div style="position:absolute;left:318.2px;top:336px;font-family:'Liberation Mono', monospace;font-size:10.89px;white-space:pre;-webkit-text-stroke:0.2px;transform:scaleY(1.1);transform-origin:0 9px;"><span style="color:#d4d4d4">    </span><span style="color:#4ec9b0">MonPdo</span><span style="color:#d4d4d4">::</span><span style="color:#9cdcfe">$unPdo</span><span style="color:#d4d4d4">-&gt;</span><span style="color:#dcdcaa">query</span><span style="color:#179fff">(</span><span style="color:#ce9178">&quot;SET CHARACTER SET utf8&quot;</span><span style="color:#179fff">)</span><span style="color:#d4d4d4">;</span></div>
<div style="position:absolute;left:283.48px;top:352.00px;font-family:'Liberation Mono', monospace;font-size:10.89px;font-weight:400;font-style:normal;color:#858585;white-space:pre;-webkit-text-stroke:0.2px;transform:scaleY(1.1);transform-origin:0 9px;">18</div>
<div style="position:absolute;left:318.2px;top:352px;font-family:'Liberation Mono', monospace;font-size:10.89px;white-space:pre;-webkit-text-stroke:0.2px;transform:scaleY(1.1);transform-origin:0 9px;"><span style="color:#d4d4d4">    </span><span style="color:#4ec9b0">MonPdo</span><span style="color:#d4d4d4">::</span><span style="color:#9cdcfe">$unPdo</span><span style="color:#d4d4d4">-&gt;</span><span style="color:#dcdcaa">setAttribute</span><span style="color:#179fff">(</span><span style="color:#4ec9b0">PDO</span><span style="color:#d4d4d4">::</span><span style="color:#d4d4d4">ATTR_ERRMODE</span><span style="color:#d4d4d4">, </span><span style="color:#4ec9b0">PDO</span><span style="color:#d4d4d4">::</span><span style="color:#d4d4d4">ERRMODE_EXCEPTION</span><span style="color:#179fff">)</span><span style="color:#d4d4d4">;</span></div>
<div style="position:absolute;left:283.48px;top:368.00px;font-family:'Liberation Mono', monospace;font-size:10.89px;font-weight:400;font-style:normal;color:#858585;white-space:pre;-webkit-text-stroke:0.2px;transform:scaleY(1.1);transform-origin:0 9px;">19</div>
<div style="position:absolute;left:318.2px;top:368px;font-family:'Liberation Mono', monospace;font-size:10.89px;white-space:pre;-webkit-text-stroke:0.2px;transform:scaleY(1.1);transform-origin:0 9px;"><span style="color:#da70d6">}</span></div>
<div style="position:absolute;left:318.66px;top:383.40px;font-family:'Liberation Sans', sans-serif;font-size:10.6px;font-weight:400;font-style:normal;color:#999999;white-space:pre;-webkit-text-stroke:0.15px;transform:scaleX(0.9358);transform-origin:0 0;">0 references | 0 overrides</div>
<div style="position:absolute;left:283.48px;top:398.00px;font-family:'Liberation Mono', monospace;font-size:10.89px;font-weight:400;font-style:normal;color:#858585;white-space:pre;-webkit-text-stroke:0.2px;transform:scaleY(1.1);transform-origin:0 9px;">20</div>
<div style="position:absolute;left:318.2px;top:398px;font-family:'Liberation Mono', monospace;font-size:10.89px;white-space:pre;-webkit-text-stroke:0.2px;transform:scaleY(1.1);transform-origin:0 9px;"><span style="color:#569cd6">public function </span><span style="color:#dcdcaa">__destruct</span><span style="color:#da70d6">()</span></div>
<div style="position:absolute;left:283.48px;top:414.00px;font-family:'Liberation Mono', monospace;font-size:10.89px;font-weight:400;font-style:normal;color:#858585;white-space:pre;-webkit-text-stroke:0.2px;transform:scaleY(1.1);transform-origin:0 9px;">21</div>
<div style="position:absolute;left:318.2px;top:414px;font-family:'Liberation Mono', monospace;font-size:10.89px;white-space:pre;-webkit-text-stroke:0.2px;transform:scaleY(1.1);transform-origin:0 9px;"><span style="color:#da70d6">{</span></div>
<div style="position:absolute;left:283.48px;top:430.00px;font-family:'Liberation Mono', monospace;font-size:10.89px;font-weight:400;font-style:normal;color:#858585;white-space:pre;-webkit-text-stroke:0.2px;transform:scaleY(1.1);transform-origin:0 9px;">22</div>
<div style="position:absolute;left:318.2px;top:430px;font-family:'Liberation Mono', monospace;font-size:10.89px;white-space:pre;-webkit-text-stroke:0.2px;transform:scaleY(1.1);transform-origin:0 9px;"><span style="color:#d4d4d4">    </span><span style="color:#4ec9b0">MonPdo</span><span style="color:#d4d4d4">::</span><span style="color:#9cdcfe">$unPdo</span><span style="color:#d4d4d4"> = </span><span style="color:#569cd6">null</span><span style="color:#d4d4d4">;</span></div>
<div style="position:absolute;left:283.48px;top:447.00px;font-family:'Liberation Mono', monospace;font-size:10.89px;font-weight:400;font-style:normal;color:#858585;white-space:pre;-webkit-text-stroke:0.2px;transform:scaleY(1.1);transform-origin:0 9px;">23</div>
<div style="position:absolute;left:318.2px;top:447px;font-family:'Liberation Mono', monospace;font-size:10.89px;white-space:pre;-webkit-text-stroke:0.2px;transform:scaleY(1.1);transform-origin:0 9px;"><span style="color:#da70d6">}</span></div>
<div style="position:absolute;left:283.48px;top:463.00px;font-family:'Liberation Mono', monospace;font-size:10.89px;font-weight:400;font-style:normal;color:#858585;white-space:pre;-webkit-text-stroke:0.2px;transform:scaleY(1.1);transform-origin:0 9px;">24</div>
<div style="position:absolute;left:318.2px;top:463px;font-family:'Liberation Mono', monospace;font-size:10.89px;white-space:pre;-webkit-text-stroke:0.2px;transform:scaleY(1.1);transform-origin:0 9px;"><span style="color:#6a9955">/**</span></div>
<div style="position:absolute;left:283.48px;top:479.00px;font-family:'Liberation Mono', monospace;font-size:10.89px;font-weight:400;font-style:normal;color:#858585;white-space:pre;-webkit-text-stroke:0.2px;transform:scaleY(1.1);transform-origin:0 9px;">25</div>
<div style="position:absolute;left:318.2px;top:479px;font-family:'Liberation Mono', monospace;font-size:10.89px;white-space:pre;-webkit-text-stroke:0.2px;transform:scaleY(1.1);transform-origin:0 9px;"><span style="color:#6a9955">*   Fonction statique qui cree l&#x27;unique instance de la classe</span></div>
<div style="position:absolute;left:283.48px;top:495.00px;font-family:'Liberation Mono', monospace;font-size:10.89px;font-weight:400;font-style:normal;color:#858585;white-space:pre;-webkit-text-stroke:0.2px;transform:scaleY(1.1);transform-origin:0 9px;">26</div>
<div style="position:absolute;left:318.2px;top:495px;font-family:'Liberation Mono', monospace;font-size:10.89px;white-space:pre;-webkit-text-stroke:0.2px;transform:scaleY(1.1);transform-origin:0 9px;"><span style="color:#6a9955">* Appel : $instanceMonPdo = MonPdo::getMonPdo();</span></div>
<div style="position:absolute;left:283.48px;top:511.00px;font-family:'Liberation Mono', monospace;font-size:10.89px;font-weight:400;font-style:normal;color:#858585;white-space:pre;-webkit-text-stroke:0.2px;transform:scaleY(1.1);transform-origin:0 9px;">27</div>
<div style="position:absolute;left:318.2px;top:511px;font-family:'Liberation Mono', monospace;font-size:10.89px;white-space:pre;-webkit-text-stroke:0.2px;transform:scaleY(1.1);transform-origin:0 9px;"><span style="color:#6a9955">* l&#x27;unique objet de la classe MonPdo</span></div>
<div style="position:absolute;left:283.48px;top:527.00px;font-family:'Liberation Mono', monospace;font-size:10.89px;font-weight:400;font-style:normal;color:#858585;white-space:pre;-webkit-text-stroke:0.2px;transform:scaleY(1.1);transform-origin:0 9px;">28</div>
<div style="position:absolute;left:318.2px;top:527px;font-family:'Liberation Mono', monospace;font-size:10.89px;white-space:pre;-webkit-text-stroke:0.2px;transform:scaleY(1.1);transform-origin:0 9px;"><span style="color:#6a9955">*/</span></div>
<div style="position:absolute;left:318.66px;top:542.31px;font-family:'Liberation Sans', sans-serif;font-size:10.6px;font-weight:400;font-style:normal;color:#999999;white-space:pre;-webkit-text-stroke:0.15px;transform:scaleX(0.9372);transform-origin:0 0;">30 references | 0 overrides</div>
<div style="position:absolute;left:283.48px;top:557.00px;font-family:'Liberation Mono', monospace;font-size:10.89px;font-weight:400;font-style:normal;color:#858585;white-space:pre;-webkit-text-stroke:0.2px;transform:scaleY(1.1);transform-origin:0 9px;">29</div>
<div style="position:absolute;left:318.2px;top:557px;font-family:'Liberation Mono', monospace;font-size:10.89px;white-space:pre;-webkit-text-stroke:0.2px;transform:scaleY(1.1);transform-origin:0 9px;"><span style="color:#569cd6">public static function </span><span style="color:#dcdcaa">getInstance</span><span style="color:#da70d6">()</span></div>
<div style="position:absolute;left:283.48px;top:573.00px;font-family:'Liberation Mono', monospace;font-size:10.89px;font-weight:400;font-style:normal;color:#858585;white-space:pre;-webkit-text-stroke:0.2px;transform:scaleY(1.1);transform-origin:0 9px;">30</div>
<div style="position:absolute;left:318.2px;top:573px;font-family:'Liberation Mono', monospace;font-size:10.89px;white-space:pre;-webkit-text-stroke:0.2px;transform:scaleY(1.1);transform-origin:0 9px;"><span style="color:#da70d6">{</span></div>
<div style="position:absolute;left:283.48px;top:589.00px;font-family:'Liberation Mono', monospace;font-size:10.89px;font-weight:400;font-style:normal;color:#858585;white-space:pre;-webkit-text-stroke:0.2px;transform:scaleY(1.1);transform-origin:0 9px;">31</div>
<div style="position:absolute;left:318.2px;top:589px;font-family:'Liberation Mono', monospace;font-size:10.89px;white-space:pre;-webkit-text-stroke:0.2px;transform:scaleY(1.1);transform-origin:0 9px;"><span style="color:#d4d4d4">    </span><span style="color:#c586c0">if</span><span style="color:#179fff">(</span><span style="color:#569cd6">self</span><span style="color:#d4d4d4">::</span><span style="color:#9cdcfe">$unPdo</span><span style="color:#d4d4d4"> == </span><span style="color:#569cd6">null</span><span style="color:#179fff">)</span></div>
<div style="position:absolute;left:283.48px;top:605.00px;font-family:'Liberation Mono', monospace;font-size:10.89px;font-weight:400;font-style:normal;color:#858585;white-space:pre;-webkit-text-stroke:0.2px;transform:scaleY(1.1);transform-origin:0 9px;">32</div>
<div style="position:absolute;left:318.2px;top:605px;font-family:'Liberation Mono', monospace;font-size:10.89px;white-space:pre;-webkit-text-stroke:0.2px;transform:scaleY(1.1);transform-origin:0 9px;"><span style="color:#d4d4d4">    </span><span style="color:#179fff">{</span></div>
<div style="position:absolute;left:283.48px;top:622.00px;font-family:'Liberation Mono', monospace;font-size:10.89px;font-weight:400;font-style:normal;color:#858585;white-space:pre;-webkit-text-stroke:0.2px;transform:scaleY(1.1);transform-origin:0 9px;">33</div>
<div style="position:absolute;left:318.2px;top:622px;font-family:'Liberation Mono', monospace;font-size:10.89px;white-space:pre;-webkit-text-stroke:0.2px;transform:scaleY(1.1);transform-origin:0 9px;"><span style="color:#d4d4d4">        </span><span style="color:#569cd6">self</span><span style="color:#d4d4d4">::</span><span style="color:#9cdcfe">$monPdo</span><span style="color:#d4d4d4">= </span><span style="color:#569cd6">new </span><span style="color:#4ec9b0">MonPdo</span><span style="color:#ffd700">()</span><span style="color:#d4d4d4">;</span></div>
<div style="position:absolute;left:283.48px;top:638.00px;font-family:'Liberation Mono', monospace;font-size:10.89px;font-weight:400;font-style:normal;color:#858585;white-space:pre;-webkit-text-stroke:0.2px;transform:scaleY(1.1);transform-origin:0 9px;">34</div>
<div style="position:absolute;left:318.2px;top:638px;font-family:'Liberation Mono', monospace;font-size:10.89px;white-space:pre;-webkit-text-stroke:0.2px;transform:scaleY(1.1);transform-origin:0 9px;"><span style="color:#d4d4d4">    </span><span style="color:#179fff">}</span></div>
<div style="position:absolute;left:283.48px;top:654.00px;font-family:'Liberation Mono', monospace;font-size:10.89px;font-weight:400;font-style:normal;color:#858585;white-space:pre;-webkit-text-stroke:0.2px;transform:scaleY(1.1);transform-origin:0 9px;">35</div>
<div style="position:absolute;left:318.2px;top:654px;font-family:'Liberation Mono', monospace;font-size:10.89px;white-space:pre;-webkit-text-stroke:0.2px;transform:scaleY(1.1);transform-origin:0 9px;"><span style="color:#d4d4d4">    </span><span style="color:#c586c0">return </span><span style="color:#569cd6">self</span><span style="color:#d4d4d4">::</span><span style="color:#9cdcfe">$unPdo</span><span style="color:#d4d4d4">;</span></div>
<div style="position:absolute;left:283.48px;top:670.00px;font-family:'Liberation Mono', monospace;font-size:10.89px;font-weight:400;font-style:normal;color:#858585;white-space:pre;-webkit-text-stroke:0.2px;transform:scaleY(1.1);transform-origin:0 9px;">36</div>
<div style="position:absolute;left:318.2px;top:670px;font-family:'Liberation Mono', monospace;font-size:10.89px;white-space:pre;-webkit-text-stroke:0.2px;transform:scaleY(1.1);transform-origin:0 9px;"><span style="color:#da70d6">}</span></div>
<div style="position:absolute;left:514.3px;top:118.2px;width:1.8px;height:15.8px;background:#aeafad;"></div>
<div style="position:absolute;left:1px;top:673.6px;width:1058px;height:6px;background:#007acc;"></div>
<div style="position:absolute;left:1px;top:673.6px;width:28px;height:6px;background:#16825d;"></div>
<div style="position:absolute;left:16.8px;top:677.6px;width:1.4px;height:1.4px;background:#cfe3f3;opacity:0.8;border-radius:1px 1px 0 0;"></div>
<div style="position:absolute;left:94.9px;top:677.6px;width:2.8px;height:1.4px;background:#cfe3f3;opacity:0.8;border-radius:1px 1px 0 0;"></div>
<div style="position:absolute;left:144.2px;top:677.6px;width:1.5px;height:1.4px;background:#cfe3f3;opacity:0.8;border-radius:1px 1px 0 0;"></div>
<div style="position:absolute;left:36.0px;top:677.2px;width:6.0px;height:6.0px;box-sizing:border-box;border:1.2px solid #d6e7f5;border-radius:50%;opacity:0.85;"></div>
<div style="position:absolute;left:118.2px;top:677.2px;width:7.2px;height:7.2px;box-sizing:border-box;border:1.2px solid #d6e7f5;border-radius:50%;opacity:0.85;"></div>
</body></html>
